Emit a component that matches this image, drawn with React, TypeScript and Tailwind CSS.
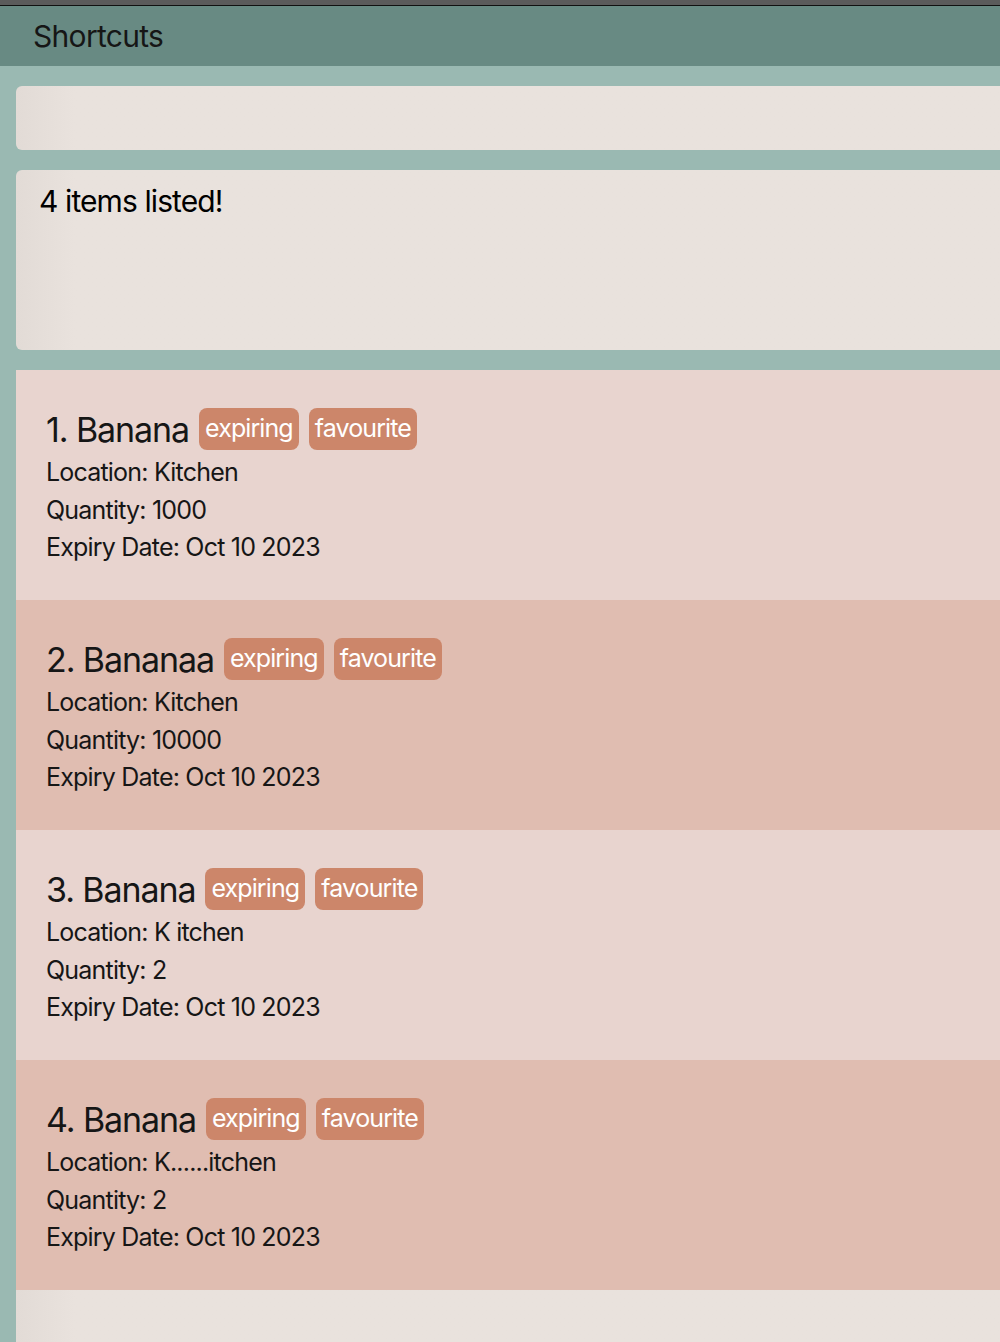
const items = [
  { name: "Banana", location: "Kitchen", quantity: "1000", expiry: "Oct 10 2023" },
  { name: "Bananaa", location: "Kitchen", quantity: "10000", expiry: "Oct 10 2023" },
  { name: "Banana", location: "K itchen", quantity: "2", expiry: "Oct 10 2023" },
  { name: "Banana", location: "K......itchen", quantity: "2", expiry: "Oct 10 2023" },
];

function Tag({ label }: { label: string }) {
  return (
    <span className="flex h-[42px] items-center rounded-[8px] bg-[#cc866a] px-[6px] text-[25px] tracking-[-0.9px] text-white">
      {label}
    </span>
  );
}

export default function App() {
  return (
    <div
      className="flex min-h-[1342px] flex-col bg-[#9ab9b2] text-[#161616]"
      style={{ fontFamily: "Inter, 'Noto Sans', sans-serif" }}
    >
      <div className="h-[5px] bg-[#5b5b5b]" />
      <div className="h-px bg-[#111]" />
      <header className="flex h-[60px] items-center bg-[#688a83] pl-[33px] text-[30px] tracking-[-0.7px]">
        Shortcuts
      </header>

      <div className="flex flex-col pl-4 pt-5">
        <div className="h-16 rounded-l-[6px] bg-gradient-to-r from-[#e2dbd6] via-[#e9e2dd] via-[6%] to-[#e9e2dd]" />

        <div className="mt-5 h-[180px] rounded-l-[6px] bg-gradient-to-r from-[#e2dbd6] via-[#e9e2dd] via-[6%] to-[#e9e2dd] pl-[23px] pt-[9px] text-[30px] tracking-[-0.9px] text-black">
          4 items listed!
        </div>

        <div className="mt-5 flex flex-col">
          {items.map((item, i) => (
            <div
              key={i}
              className={`h-[230px] pl-[30px] pt-[38px] ${i % 2 === 0 ? "bg-[#e8d4cf]" : "bg-[#e0bdb1]"}`}
            >
              <div className="flex h-[42px] items-center gap-[10px]">
                <span className="text-[34px] tracking-[-1.1px]">
                  {i + 1}. {item.name}
                </span>
                <Tag label="expiring" />
                <Tag label="favourite" />
              </div>
              <div className="mt-[4px] text-[25px] leading-[37.5px] tracking-[-0.8px]">
                <div>Location: {item.location}</div>
                <div>Quantity: {item.quantity}</div>
                <div>Expiry Date: {item.expiry}</div>
              </div>
            </div>
          ))}
        </div>

        <div className="h-[52px] bg-gradient-to-r from-[#e2dbd6] via-[#e9e2dd] via-[6%] to-[#e9e2dd]" />
      </div>
    </div>
  );
}
